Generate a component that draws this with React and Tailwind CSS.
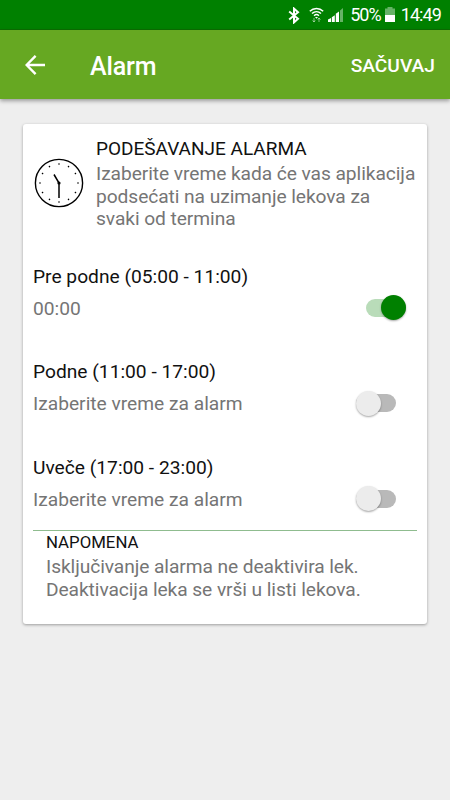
import React from 'react';

const terms = [
    { title: 'Pre podne (05:00 - 11:00)', value: '00:00', on: true },
    { title: 'Podne (11:00 - 17:00)', value: 'Izaberite vreme za alarm', on: false },
    { title: 'Uveče (17:00 - 23:00)', value: 'Izaberite vreme za alarm', on: false },
];

const StatusBar = () => (
    <div className="h-[30px] bg-[#008000] border-b border-[#0b6e00] flex items-center justify-end pr-[9px] pt-[1px] text-white">
        <svg className="w-[12px] h-[17px] mr-[9px]" viewBox="0 0 12 17" fill="none" stroke="currentColor" strokeWidth="2">
            <path d="M1.2 4.6 10 11.8 6 15.4V1.6L10 5.2 1.2 12.4" />
        </svg>
        <svg className="w-[15px] h-[16px] mr-[4px]" viewBox="0 0 15 16" fill="none" stroke="currentColor" strokeWidth="1.5">
            <path d="M.8 4.2C4.6.5 10.4.5 14.2 4.2M3 6.5c2.6-2.4 6.4-2.4 9 0M5.1 8.7c1.4-1.3 3.4-1.3 4.8 0" />
            <path d="M6 10h3l-1.5 1.8z" fill="currentColor" stroke="none" />
            <path d="M5 11v4M3.6 13.4 5 15l1.2-1.6M10 15v-4M8.8 12.6 10 11l1.4 1.6" strokeWidth="1" opacity=".5" />
        </svg>
        <svg className="w-[16px] h-[16px] mr-[6px]" viewBox="0 0 16 16" fill="currentColor">
            <path d="M0 12.5 3 11v4H0zM3.8 10.2l3-2V15h-3zM7.8 6.8l3.2-2.3V15H7.8z" />
            <path d="M12 3.4 15 1v14h-3z" opacity=".4" />
        </svg>
        <span className="text-[18px] leading-[28px] tracking-[-1px] mr-[4px]">50%</span>
        <svg className="w-[10px] h-[16px] mr-[6px]" viewBox="0 0 10 16" fill="currentColor">
            <path d="M2.5 0h5v1.5H10V8H0V1.5h2.5z" opacity=".4" />
            <path d="M0 8h10v7H0z" />
        </svg>
        <span className="text-[18px] leading-[28px] tracking-[-0.9px]">14:49</span>
    </div>
);

const AppBar = () => (
    <div className="h-[69px] bg-[#66a822] flex items-center px-[15px] text-white shadow-[0_2px_4px_rgba(0,0,0,0.35)]">
        <svg className="w-[20px] h-[20px] ml-[10px]" viewBox="0 0 20 20" fill="none" stroke="currentColor" strokeWidth="2.4">
            <path d="M20 10H2M10.6.9 1.6 10l9 9.1" />
        </svg>
        <h1 className="ml-[45px] mt-[4px] text-[25px] leading-[30px] tracking-[-0.15px] font-medium">Alarm</h1>
        <span className="ml-auto mt-[3px] text-[19.2px] leading-[24px] font-medium">SAČUVAJ</span>
    </div>
);

const Clock = () => (
    <svg className="w-[50px] h-[50px] shrink-0" viewBox="0 0 50 50" fill="none" stroke="#000">
        <circle cx="25" cy="25" r="23.6" strokeWidth="1.4" />
        <path d="M25 40V25l-5-8.5" strokeWidth="1.5" />
        <circle cx="25" cy="25" r="1.6" fill="#000" stroke="none" />
        {Array.from({ length: 12 }, (_, i) => (
            <circle key={i} cx="25" cy="6" r="0.8" fill="#000" stroke="none" transform={`rotate(${i * 30} 25 25)`} />
        ))}
    </svg>
);

const Switch = ({ on }) => (
    <div className={`w-[50px] h-[26px] -mt-[2px] flex items-center ${on ? 'justify-end' : 'justify-start'}`}>
        <div className={`w-[40px] h-[18px] rounded-full flex items-center ${on ? 'bg-[#b9dcb9] justify-end' : 'bg-[#b9b9b9] justify-start'}`}>
            <div className={`w-[25px] h-[25px] shrink-0 rounded-full shadow-[0_1px_2px_rgba(0,0,0,0.35)] ${on ? 'bg-[#008000]' : 'bg-[#ececec]'}`} />
        </div>
    </div>
);

const App = () => (
    <div className="w-[450px] h-[800px] overflow-hidden bg-[#eeeeee] font-[Roboto,sans-serif] text-[#111]">
        <StatusBar />
        <AppBar />

        <div className="mt-[25px] mx-[23px] h-[500px] bg-white rounded-[3px] shadow-[0_1px_3px_rgba(0,0,0,0.35)] flex flex-col">
            <div className="flex pl-[11px] pt-[13px]">
                <div className="pt-[21px]">
                    <Clock />
                </div>
                <div className="ml-[12px] whitespace-nowrap">
                    <h2 className="text-[19px] leading-[24px]">PODEŠAVANJE ALARMA</h2>
                    <p className="mt-[2px] text-[19.2px] leading-[22.5px] tracking-[-0.07px] text-[#757575]">
                        Izaberite vreme kada će vas aplikacija<br />
                        podsećati na uzimanje lekova za<br />
                        svaki od termina
                    </p>
                </div>
            </div>

            <div className="mt-[34px] pl-[10px] pr-[21px] whitespace-nowrap">
                {terms.map((term) => (
                    <div key={term.title} className="h-[95.5px]">
                        <h3 className="text-[19.2px] leading-[24px]">{term.title}</h3>
                        <div className="mt-[7px] flex items-center justify-between">
                            <span className="text-[19.2px] leading-[26px] text-[#757575]">{term.value}</span>
                            <Switch on={term.on} />
                        </div>
                    </div>
                ))}
            </div>

            <div className="mx-[10px] -mt-[21px] border-t border-[#8fbc8f] pl-[13px] whitespace-nowrap">
                <h4 className="text-[16.8px] leading-[23px]">NAPOMENA</h4>
                <p className="mt-[2px] text-[19.2px] leading-[22.5px] tracking-[-0.08px] text-[#757575]">
                    Isključivanje alarma ne deaktivira lek.<br />
                    Deaktivacija leka se vrši u listi lekova.
                </p>
            </div>
        </div>
    </div>
);

export default App;
